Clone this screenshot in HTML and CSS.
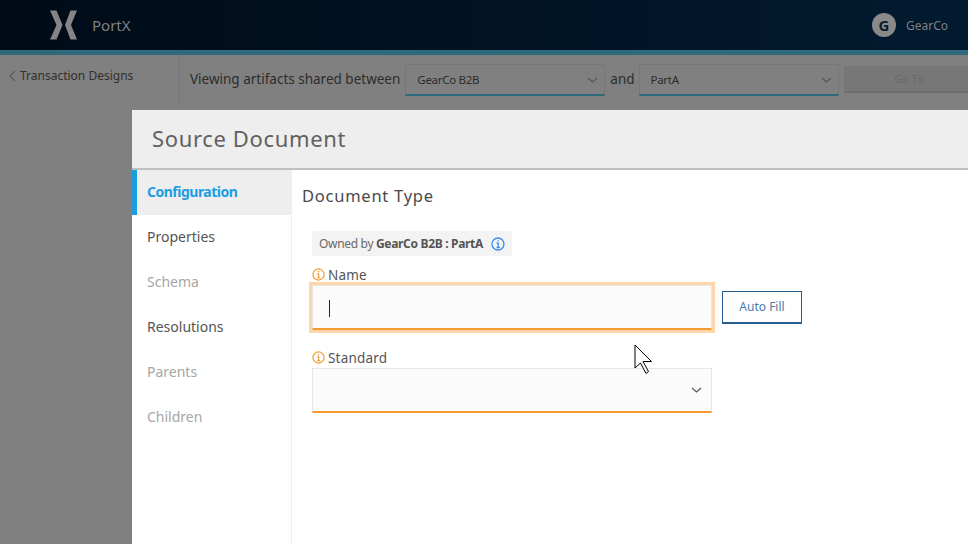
FILE: index.html
```html
<!DOCTYPE html>
<html lang="en">
<head>
    <meta charset="UTF-8">
    <meta name="viewport" content="width=device-width, initial-scale=1.0">
    <title>PortX</title>
    <link rel="stylesheet" href="styles.css">
</head>
<body>
    <header class="topbar">
        <div class="brand">
            <svg class="logo" width="27" height="30" viewBox="0 0 27 30">
                <path d="M0 0.500H6.500L12.500 15L6.500 29.500H0L6.500 15Z"/>
                <path d="M27 0.500H20.500L15 15L20.500 29.500H27L21 15Z"/>
            </svg>
            <span class="brand-name">PortX</span>
        </div>
        <div class="account">
            <span class="avatar">G</span>
            <span class="account-name">GearCo</span>
        </div>
    </header>

    <div class="page">
        <aside class="back">
            <svg width="7" height="12" viewBox="0 0 7 12"><path d="M6 1L1 6L6 11"/></svg>
            <span>Transaction Designs</span>
        </aside>
        <div class="filter">
            <span class="filter-text">Viewing artifacts shared between</span>
            <div class="filter-select">
                <span>GearCo B2B</span>
                <svg class="chevron" width="11" height="6" viewBox="0 0 11 6"><path d="M1 1L5.500 5L10 1"/></svg>
            </div>
            <span class="filter-text filter-and">and</span>
            <div class="filter-select">
                <span>PartA</span>
                <svg class="chevron" width="11" height="6" viewBox="0 0 11 6"><path d="M1 1L5.500 5L10 1"/></svg>
            </div>
            <button class="goto" type="button">Go To</button>
        </div>
    </div>

    <section class="modal">
        <h1 class="modal-title">Source Document</h1>
        <div class="modal-body">
            <nav class="tabs">
                <a class="tab active">Configuration</a>
                <a class="tab">Properties</a>
                <a class="tab disabled">Schema</a>
                <a class="tab">Resolutions</a>
                <a class="tab disabled">Parents</a>
                <a class="tab disabled">Children</a>
            </nav>
            <div class="content">
                <h2 class="content-title">Document Type</h2>
                <div class="owner">
                    <span>Owned by <b>GearCo B2B : PartA</b></span>
                    <svg class="info blue" width="14" height="14" viewBox="0 0 14 14">
                        <circle cx="7" cy="7" r="6"/>
                        <path d="M5.500 6.200H7.200V10.500M5.500 10.500H9M7 3.200V4.600"/>
                    </svg>
                </div>
                <label class="field-label">
                    <svg class="info orange" width="13" height="13" viewBox="0 0 14 14">
                        <circle cx="7" cy="7" r="6"/>
                        <path d="M5.500 6.200H7.200V10.500M5.500 10.500H9M7 3.200V4.600"/>
                    </svg>
                    Name
                </label>
                <div class="name-row">
                    <div class="input focused"><span class="caret"></span></div>
                    <button class="autofill" type="button">Auto Fill</button>
                </div>
                <label class="field-label standard-label">
                    <svg class="info orange" width="13" height="13" viewBox="0 0 14 14">
                        <circle cx="7" cy="7" r="6"/>
                        <path d="M5.500 6.200H7.200V10.500M5.500 10.500H9M7 3.200V4.600"/>
                    </svg>
                    Standard
                </label>
                <div class="input select">
                    <svg class="chevron" width="11" height="6" viewBox="0 0 11 6"><path d="M1 1L5.500 5L10 1"/></svg>
                </div>
            </div>
        </div>
    </section>

    <svg class="pointer" width="20" height="32" viewBox="0 0 20 32">
        <path d="M1 1L17.500 17.500H9L14.500 27.500L12 29.500L6.500 19L1 24Z"/>
    </svg>
</body>
</html>
```

FILE: styles.css
```css
html, body {
    height: 100%;
}

body {
    margin: 0;
    background-color: #808080;
    font-family: 'Noto Sans', sans-serif;
    overflow: hidden;
    position: relative;
}

.topbar {
    height: 50px;
    border-bottom: 5px solid #2f6a7c;
    background: linear-gradient(to right, #000b17, #021a30);
    display: flex;
    align-items: center;
    justify-content: space-between;
    padding: 0 20px 0 50px;
}

.brand {
    display: flex;
    align-items: center;
    gap: 15px;
}

.logo {
    fill: #858585;
}

.brand-name {
    color: #7f7f7f;
    font-size: 15px;
}

.account {
    display: flex;
    align-items: center;
    gap: 10px;
}

.avatar {
    width: 24px;
    height: 24px;
    border-radius: 50%;
    background-color: #8a8a8a;
    color: #0c1c2e;
    font-size: 15px;
    font-weight: 700;
    display: flex;
    align-items: center;
    justify-content: center;
}

.account-name {
    color: #7f7f7f;
    font-size: 12px;
}

.page {
    display: flex;
    height: 50px;
}

.back {
    width: 180px;
    padding: 12px 0 0 9px;
    box-sizing: border-box;
    border-right: 1px solid #767676;
    display: flex;
    align-items: flex-start;
    gap: 4px;
    color: #33302c;
    font-size: 12px;
    flex-shrink: 0;
}

.back svg {
    margin-top: 3px;
    fill: none;
    stroke: #5a5a5a;
    stroke-width: 1.200;
}

.filter {
    flex: 1;
    height: 48px;
    border-bottom: 2px solid #777;
    display: flex;
    align-items: flex-start;
    padding: 9px 0 0 10px;
    white-space: nowrap;
}

.filter-text {
    color: #2c2c2c;
    font-size: 13.500px;
    line-height: 30px;
    margin-right: 5px;
}

.filter-and {
    margin-right: 4px;
}

.filter-select {
    width: 181px;
    height: 29px;
    border: 1px solid #777;
    border-bottom: 2px solid #2f6a7c;
    margin-right: 5px;
    padding: 0 6px 0 11px;
    display: flex;
    align-items: center;
    justify-content: space-between;
    color: #2c2c2c;
    font-size: 11.500px;
    letter-spacing: -0.300px;
}

.chevron {
    fill: none;
    stroke: #555;
    stroke-width: 1.200;
}

.goto {
    width: 131px;
    height: 27px;
    margin: 2px 0 0;
    padding: 0;
    border: none;
    border-bottom: 2px solid #6e6e6e;
    background-color: #777;
    color: #6a6a6a;
    font-family: inherit;
    font-size: 11px;
    flex-shrink: 0;
}

.modal {
    position: absolute;
    left: 132px;
    right: 0;
    top: 110px;
    bottom: 0;
    background-color: #fff;
    display: flex;
    flex-direction: column;
}

.modal-title {
    margin: 0;
    height: 58px;
    line-height: 57px;
    padding-left: 20px;
    background-color: #eee;
    border-bottom: 2px solid #c0c0c0;
    color: #616161;
    font-size: 22px;
    font-weight: 400;
    letter-spacing: 0.650px;
}

.modal-body {
    flex: 1;
    display: flex;
}

.tabs {
    width: 159px;
    border-right: 1px solid #eee;
    flex-shrink: 0;
}

.tab {
    display: block;
    height: 45px;
    line-height: 44px;
    padding-left: 15px;
    color: #545454;
    font-size: 14px;
}

.tab.active {
    background-color: #eee;
    border-left: 5px solid #1b9de2;
    padding-left: 10px;
    color: #1b9de2;
    font-weight: 700;
    letter-spacing: -0.500px;
}

.tab.disabled {
    color: #a6a6a6;
}

.content {
    flex: 1;
    padding: 13px 0 0 10px;
    color: #555;
}

.content-title {
    margin: 0 0 22px;
    height: 26px;
    line-height: 26px;
    color: #4a4a4a;
    font-size: 16.500px;
    font-weight: 400;
    letter-spacing: 0.750px;
}

.owner {
    margin-left: 10px;
    width: 200px;
    height: 25px;
    box-sizing: border-box;
    padding: 0 7px;
    background-color: #f3f3f3;
    border-radius: 3px;
    display: flex;
    align-items: center;
    justify-content: space-between;
    color: #6a6a6a;
    font-size: 12px;
    letter-spacing: -0.320px;
    white-space: nowrap;
}

.owner b {
    color: #555;
}

.info {
    fill: none;
    stroke-width: 1.300;
    flex-shrink: 0;
}

.info.blue {
    stroke: #3d8eef;
}

.info.orange {
    stroke: #f39a32;
}

.field-label {
    margin: 9px 0 1px 10px;
    height: 19px;
    display: flex;
    align-items: center;
    gap: 3px;
    color: #555;
    font-size: 13.500px;
    letter-spacing: 0.200px;
}

.standard-label {
    margin-top: 18px;
}

.name-row {
    display: flex;
    align-items: center;
    gap: 10px;
    margin-left: 10px;
}

.input {
    width: 400px;
    height: 45px;
    box-sizing: border-box;
    border: 1px solid #e6e6e6;
    border-bottom: 2px solid #f39a32;
    background-color: #fbfbfb;
    display: flex;
    align-items: center;
}

.input.focused {
    box-shadow: 0 0 0 3px #fdd6ab;
    padding: 2px 0 0 16px;
}

.input.select {
    margin-left: 10px;
    justify-content: flex-end;
    padding-right: 9px;
}

.caret {
    width: 1px;
    height: 17px;
    background-color: #222;
}

.autofill {
    width: 80px;
    height: 33px;
    padding: 0 0 2px;
    background-color: #fff;
    border: 1px solid #255f8f;
    border-bottom-width: 2px;
    color: #4a7cab;
    font-family: inherit;
    font-size: 12px;
}

.pointer {
    position: absolute;
    left: 633.500px;
    top: 343.500px;
    fill: #fff;
    stroke: #000;
    stroke-width: 1;
}
```
